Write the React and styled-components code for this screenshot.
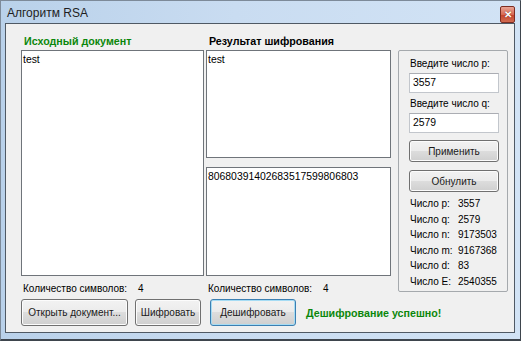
import React from 'react';
import styled, { createGlobalStyle } from 'styled-components';

const Global = createGlobalStyle`
  html, body {
    margin: 0;
    padding: 0;
    background: #ffffff;
  }
  body {
    font-family: "Liberation Sans", Arial, sans-serif;
    font-size: 10px;
    color: #000;
  }
`;

const Window = styled.div`
  width: 521px;
  height: 341px;
  box-sizing: border-box;
  display: flex;
  flex-direction: column;
  background: linear-gradient(90deg, #b9d1ea 0%, #c9dcf1 45%, #d2e3f5 100%);
  border: 1px solid #7d8a99;
  border-right-color: #3e454d;
  border-bottom: 2px solid #3e454d;
`;

const TitleBar = styled.div`
  height: 22px;
  display: flex;
  align-items: center;
  justify-content: space-between;
  padding: 0 5px 0 6px;
`;

const Title = styled.span`
  font-size: 12px;
  color: #1e1e1e;
  padding-top: 2px;
`;

const CloseButton = styled.div`
  width: 13px;
  height: 15px;
  margin-top: 5px;
  border: 1px solid #7c2d22;
  border-radius: 2px;
  background: linear-gradient(180deg, #e8a495 0%, #d86a54 50%, #c4432c 51%, #d26a4f 100%);
  display: flex;
  align-items: center;
  justify-content: center;
  color: #fff;
  font-size: 10px;
  font-weight: bold;
  line-height: 1;
  text-shadow: 0 0 1px #5a1a10;
`;

const Client = styled.div`
  flex: 1;
  margin: 0 5px 6px 4px;
  background: #f0f0f0;
  border: 1px solid #4f5964;
  padding: 11px 0 0 15px;
  display: flex;
  flex-direction: column;
`;

const Top = styled.div`
  display: flex;
  align-items: flex-start;
`;

const Column = styled.div`
  width: ${p => p.$w}px;
  margin-left: ${p => p.$ml || 0}px;
  display: flex;
  flex-direction: column;
`;

const Heading = styled.div`
  font-weight: bold;
  font-size: 10.7px;
  height: 15px;
  line-height: 13px;
  padding-left: 3px;
  color: ${p => p.$green ? '#0b870b' : '#000'};
`;

const TextBox = styled.div`
  height: ${p => p.$h}px;
  box-sizing: border-box;
  background: #fff;
  border: 1px solid #6f747a;
  padding: 2px 1px;
  line-height: 13px;
  font-size: 10.4px;
  margin-bottom: ${p => p.$mb || 0}px;
`;

const CountRow = styled.div`
  display: flex;
  height: 14px;
  line-height: 14px;
  margin-top: 6px;
  padding-left: 2px;
`;

const CountLabel = styled.span`
  width: 115px;
`;

const Group = styled.div`
  width: 110px;
  height: 242px;
  box-sizing: border-box;
  margin-left: 7px;
  margin-top: 15px;
  border: 1px solid #a5a9ad;
  border-radius: 2px;
  padding: 6px 0 0 10px;
  display: flex;
  flex-direction: column;
`;

const FieldLabel = styled.div`
  height: 14px;
  line-height: 14px;
  padding-left: 1px;
  margin-bottom: 2px;
`;

const Input = styled.div`
  width: 90px;
  height: 20px;
  box-sizing: border-box;
  background: #fff;
  border: 1px solid #c2c6cc;
  border-top-color: #abadb3;
  padding: 2px 3px;
  line-height: 14px;
  font-size: 10.4px;
  margin-bottom: ${p => p.$mb || 0}px;
`;

const Button = styled.div`
  width: ${p => p.$w}px;
  height: ${p => p.$h || 27}px;
  box-sizing: border-box;
  margin-left: ${p => p.$ml || 0}px;
  margin-top: ${p => p.$mt || 0}px;
  border: 1px solid ${p => p.$focus ? '#3c7fb1' : '#707070'};
  border-radius: 3px;
  background: linear-gradient(180deg, #f2f2f2 0%, #ebebeb 49%, #dddddd 50%, #cfcfcf 100%);
  box-shadow: inset 0 0 0 1px ${p => p.$focus ? '#a6dcf4' : '#fcfcfc'};
  display: flex;
  align-items: center;
  justify-content: center;
  white-space: nowrap;
  color: #1a1a1a;
`;

const Stats = styled.div`
  margin-top: 4px;
  padding-left: 1px;
`;

const StatRow = styled.div`
  display: flex;
  height: 15.6px;
  line-height: 15.6px;
`;

const StatLabel = styled.span`
  width: 48px;
`;

const Bottom = styled.div`
  display: flex;
  align-items: center;
  margin-top: 3px;
`;

const Status = styled.span`
  margin-left: 10px;
  font-weight: bold;
  font-size: 10.7px;
  color: #0b870b;
`;

const stats = [
  ['Число p:', '3557'],
  ['Число q:', '2579'],
  ['Число n:', '9173503'],
  ['Число m:', '9167368'],
  ['Число d:', '83'],
  ['Число E:', '2540355'],
];

export default function App() {
  return (
    <>
      <Global />
      <Window>
        <TitleBar>
          <Title>Алгоритм RSA</Title>
          <CloseButton>✕</CloseButton>
        </TitleBar>
        <Client>
          <Top>
            <Column $w={183}>
              <Heading $green>Исходный документ</Heading>
              <TextBox $h={226}>test</TextBox>
              <CountRow>
                <CountLabel>Количество символов:</CountLabel>
                <span>4</span>
              </CountRow>
            </Column>
            <Column $w={185} $ml={2}>
              <Heading>Результат шифрования</Heading>
              <TextBox $h={108} $mb={9}>test</TextBox>
              <TextBox $h={109}>80680391402683517599806803</TextBox>
              <CountRow>
                <CountLabel>Количество символов:</CountLabel>
                <span>4</span>
              </CountRow>
            </Column>
            <Group>
              <FieldLabel>Введите число p:</FieldLabel>
              <Input $mb={4}>3557</Input>
              <FieldLabel>Введите число q:</FieldLabel>
              <Input>2579</Input>
              <Button $w={90} $h={22} $mt={7}>Применить</Button>
              <Button $w={90} $h={22} $mt={8}>Обнулить</Button>
              <Stats>
                {stats.map(([k, v]) => (
                  <StatRow key={k}>
                    <StatLabel>{k}</StatLabel>
                    <span>{v}</span>
                  </StatRow>
                ))}
              </Stats>
            </Group>
          </Top>
          <Bottom>
            <Button $w={107}>Открыть документ...</Button>
            <Button $w={66} $ml={7}>Шифровать</Button>
            <Button $w={86} $ml={9} $focus>Дешифровать</Button>
            <Status>Дешифрование успешно!</Status>
          </Bottom>
        </Client>
      </Window>
    </>
  );
}
